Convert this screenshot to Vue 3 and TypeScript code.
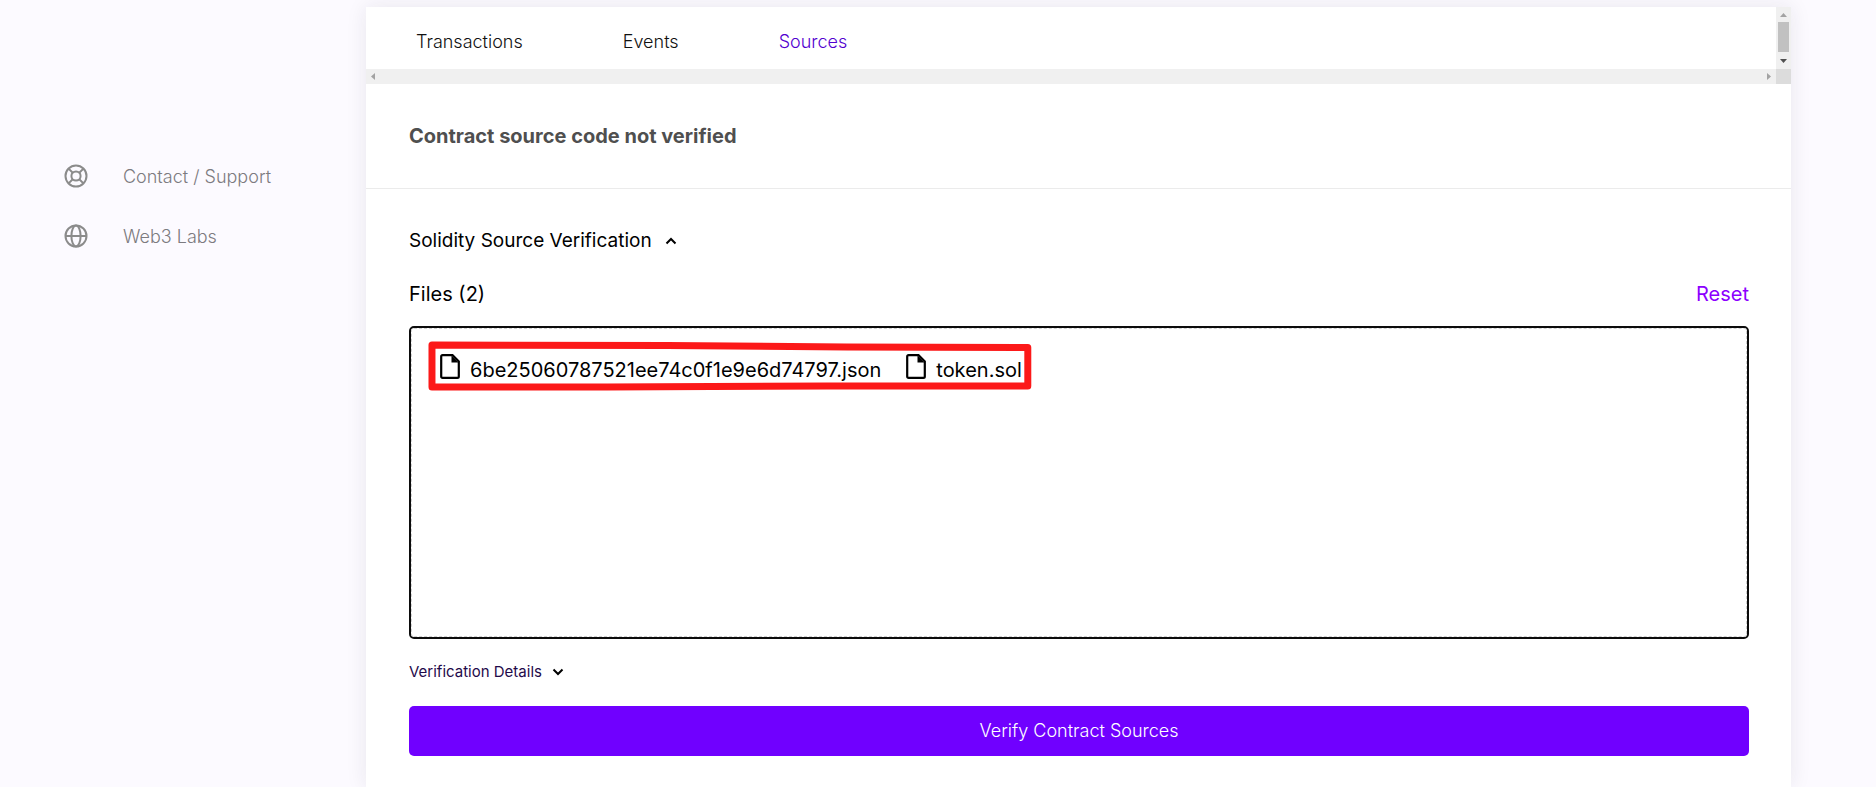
<script setup lang="ts">
import { ref } from 'vue'

interface Tab {
  id: string
  label: string
}

const tabs: Tab[] = [
  { id: 'transactions', label: 'Transactions' },
  { id: 'events', label: 'Events' },
  { id: 'sources', label: 'Sources' },
]
const activeTab = ref('sources')
const files = ref<string[]>(['6be25060787521ee74c0f1e9e6d74797.json', 'token.sol'])
const formOpen = ref(true)
const detailsOpen = ref(false)

function reset(): void {
  files.value = []
}
</script>

<template>
  <div class="page">
    <nav class="sidebar" aria-label="Help">
      <a class="side-link" href="#support">
        <svg class="side-icon" viewBox="0 0 24 24" aria-hidden="true">
          <circle cx="12" cy="12" r="10.5" />
          <circle cx="12" cy="12" r="4.6" />
          <path d="M4.6 4.6l4.1 4.1M15.3 15.3l4.1 4.1M19.4 4.6l-4.1 4.1M8.7 15.3l-4.1 4.1" />
        </svg>
        <span>Contact / Support</span>
      </a>
      <a class="side-link" href="#labs">
        <svg class="side-icon" viewBox="0 0 24 24" aria-hidden="true">
          <circle cx="12" cy="12" r="10.5" />
          <ellipse cx="12" cy="12" rx="4.6" ry="10.5" />
          <path d="M1.5 12h21" />
        </svg>
        <span>Web3 Labs</span>
      </a>
    </nav>

    <main class="card">
      <div class="tab-scroller">
        <div class="tabs" role="tablist">
          <button
            v-for="tab in tabs"
            :key="tab.id"
            type="button"
            role="tab"
            class="tab"
            :class="{ active: tab.id === activeTab }"
            :aria-selected="tab.id === activeTab"
            @click="activeTab = tab.id"
          >
            {{ tab.label }}
          </button>
        </div>
        <div class="bar-v" aria-hidden="true">
          <svg class="arrow" viewBox="0 0 15 15"><path d="M4 10h7L7.5 6z" /></svg>
          <span class="thumb"></span>
          <svg class="arrow dark" viewBox="0 0 15 15"><path d="M4 5h7L7.5 9z" /></svg>
        </div>
        <div class="bar-h" aria-hidden="true">
          <svg class="arrow" viewBox="0 0 15 15"><path d="M9 4v7L5 7.5z" /></svg>
          <svg class="arrow" viewBox="0 0 15 15"><path d="M6 4v7l4-3.5z" /></svg>
        </div>
        <div class="corner"></div>
      </div>

      <header class="status">
        <h1>Contract source code not verified</h1>
      </header>

      <section class="form">
        <button type="button" class="toggle" :aria-expanded="formOpen" @click="formOpen = !formOpen">
          Solidity Source Verification
          <svg class="chevron" viewBox="0 0 12 12" aria-hidden="true"><path d="M1.5 8.5L6 4l4.5 4.5" /></svg>
        </button>

        <div class="files-head">
          <span>Files ({{ files.length }})</span>
          <button type="button" class="reset" @click="reset">Reset</button>
        </div>

        <div class="dropzone">
          <ul class="files">
            <li v-for="file in files" :key="file" class="file">
              <svg class="file-icon" viewBox="0 0 20 25" aria-hidden="true">
                <path class="sheet" d="M2.6 1.2H12.5L18.8 7.5V22.4Q18.8 23.8 17.4 23.8H2.6Q1.2 23.8 1.2 22.4V2.6Q1.2 1.2 2.6 1.2Z" />
                <path d="M11.5 1.5L18.5 8.5H11.5Z" />
              </svg>
              <span>{{ file }}</span>
            </li>
            <svg v-if="files.length" class="marker" viewBox="0 0 606 50" preserveAspectRatio="none" aria-hidden="true">
              <path d="M4 4L240 4.5L420 6L602 6.5L602 45L400 45L180 46L4 46Z" />
            </svg>
          </ul>
        </div>

        <button type="button" class="toggle details" :aria-expanded="detailsOpen" @click="detailsOpen = !detailsOpen">
          Verification Details
          <svg class="chevron" viewBox="0 0 12 12" aria-hidden="true"><path d="M1.5 3.5L6 8l4.5-4.5" /></svg>
        </button>

        <button type="button" class="submit">Verify Contract Sources</button>
      </section>
    </main>
  </div>
</template>

<style>
body {
  background: #fcfaff;
}
</style>

<style scoped>
.page {
  display: flex;
  box-sizing: border-box;
  min-height: 100vh;
  padding: 7px 85px 0 0;
  overflow: hidden;
  font-family: Inter, "Liberation Sans", sans-serif;
  color: #000;
  background: #fcfaff;
}
button {
  margin: 0;
  padding: 0;
  border: 0;
  background: none;
  font: inherit;
  color: inherit;
  cursor: pointer;
}
.sidebar {
  display: flex;
  flex-direction: column;
  box-sizing: border-box;
  flex: 0 0 366px;
  gap: 36px;
  padding: 157px 0 0 64px;
}
.side-link {
  display: flex;
  align-items: center;
  gap: 35px;
  height: 24px;
  font-size: 18px;
  font-weight: 300;
  color: #7c7b80;
  text-decoration: none;
}
.side-icon {
  width: 24px;
  height: 24px;
  fill: none;
  stroke: #8b8b8b;
  stroke-width: 2;
}
.card {
  flex: 1;
  min-width: 0;
  background: #fff;
  box-shadow: 0 0 20px rgba(30, 30, 60, 0.09);
}
.tab-scroller {
  display: grid;
  grid-template-columns: 1fr 15px;
  grid-template-rows: 62px 15px;
}
.tabs {
  display: flex;
  overflow: hidden;
}
.tab {
  padding: 6px 50px 0;
  font-size: 18px;
  font-weight: 300;
  color: #111;
}
.tab.active {
  color: #5200d0;
}
.bar-v,
.bar-h {
  display: flex;
  justify-content: space-between;
  background: #f0f0f0;
}
.bar-v {
  flex-direction: column;
}
.arrow {
  flex: none;
  width: 15px;
  height: 15px;
  fill: #a3a3a3;
}
.arrow.dark {
  fill: #505050;
}
.thumb {
  flex: 1;
  margin: 0 2px 2px;
  background: #c1c1c1;
}
.corner {
  background: #dcdcdc;
}
.status {
  padding: 40px 43px;
  border-bottom: 1px solid #ebebeb;
}
h1 {
  margin: 0;
  font-size: 20px;
  line-height: 24px;
  font-weight: 700;
  color: #4f4f4f;
}
.form {
  display: flex;
  flex-direction: column;
  padding: 40px 42px 31px 43px;
}
.toggle {
  display: flex;
  align-items: center;
  align-self: flex-start;
  gap: 13px;
  font-size: 19px;
  line-height: 24px;
}
.chevron {
  width: 12px;
  height: 12px;
  fill: none;
  stroke: #000;
  stroke-width: 2;
}
.files-head {
  display: flex;
  justify-content: space-between;
  margin: 29px 0 20px;
  font-size: 20px;
  line-height: 24px;
}
.reset {
  color: #8c00ff;
}
.dropzone {
  box-sizing: border-box;
  min-height: 313px;
  padding: 26px 29px;
  border: 2px solid #0c0c0c;
  border-radius: 5px;
  outline: 1px dashed #d0d0d0;
  outline-offset: -3px;
}
.files {
  position: relative;
  display: inline-flex;
  gap: 25px;
  margin: 0;
  padding: 0;
  list-style: none;
}
.file {
  display: flex;
  gap: 10px;
  font-size: 20px;
  line-height: 32px;
}
.file-icon {
  width: 20px;
  height: 25px;
}
.sheet {
  fill: none;
  stroke: #000;
  stroke-width: 2.2;
}
/* Hand-drawn highlight around the uploaded files */
.marker {
  position: absolute;
  top: -13px;
  left: -12px;
  width: calc(100% + 22px);
  height: 50px;
  fill: none;
  stroke: #fc1919;
  stroke-width: 7;
  stroke-linejoin: round;
  pointer-events: none;
}
.details {
  gap: 10px;
  margin: 21px 0 22px;
  font-size: 15px;
  color: #1f0a4a;
}
.submit {
  height: 50px;
  padding-bottom: 2px;
  border-radius: 5px;
  font-size: 18px;
  font-weight: 300;
  color: #fff;
  background: #7000ff;
}
</style>
